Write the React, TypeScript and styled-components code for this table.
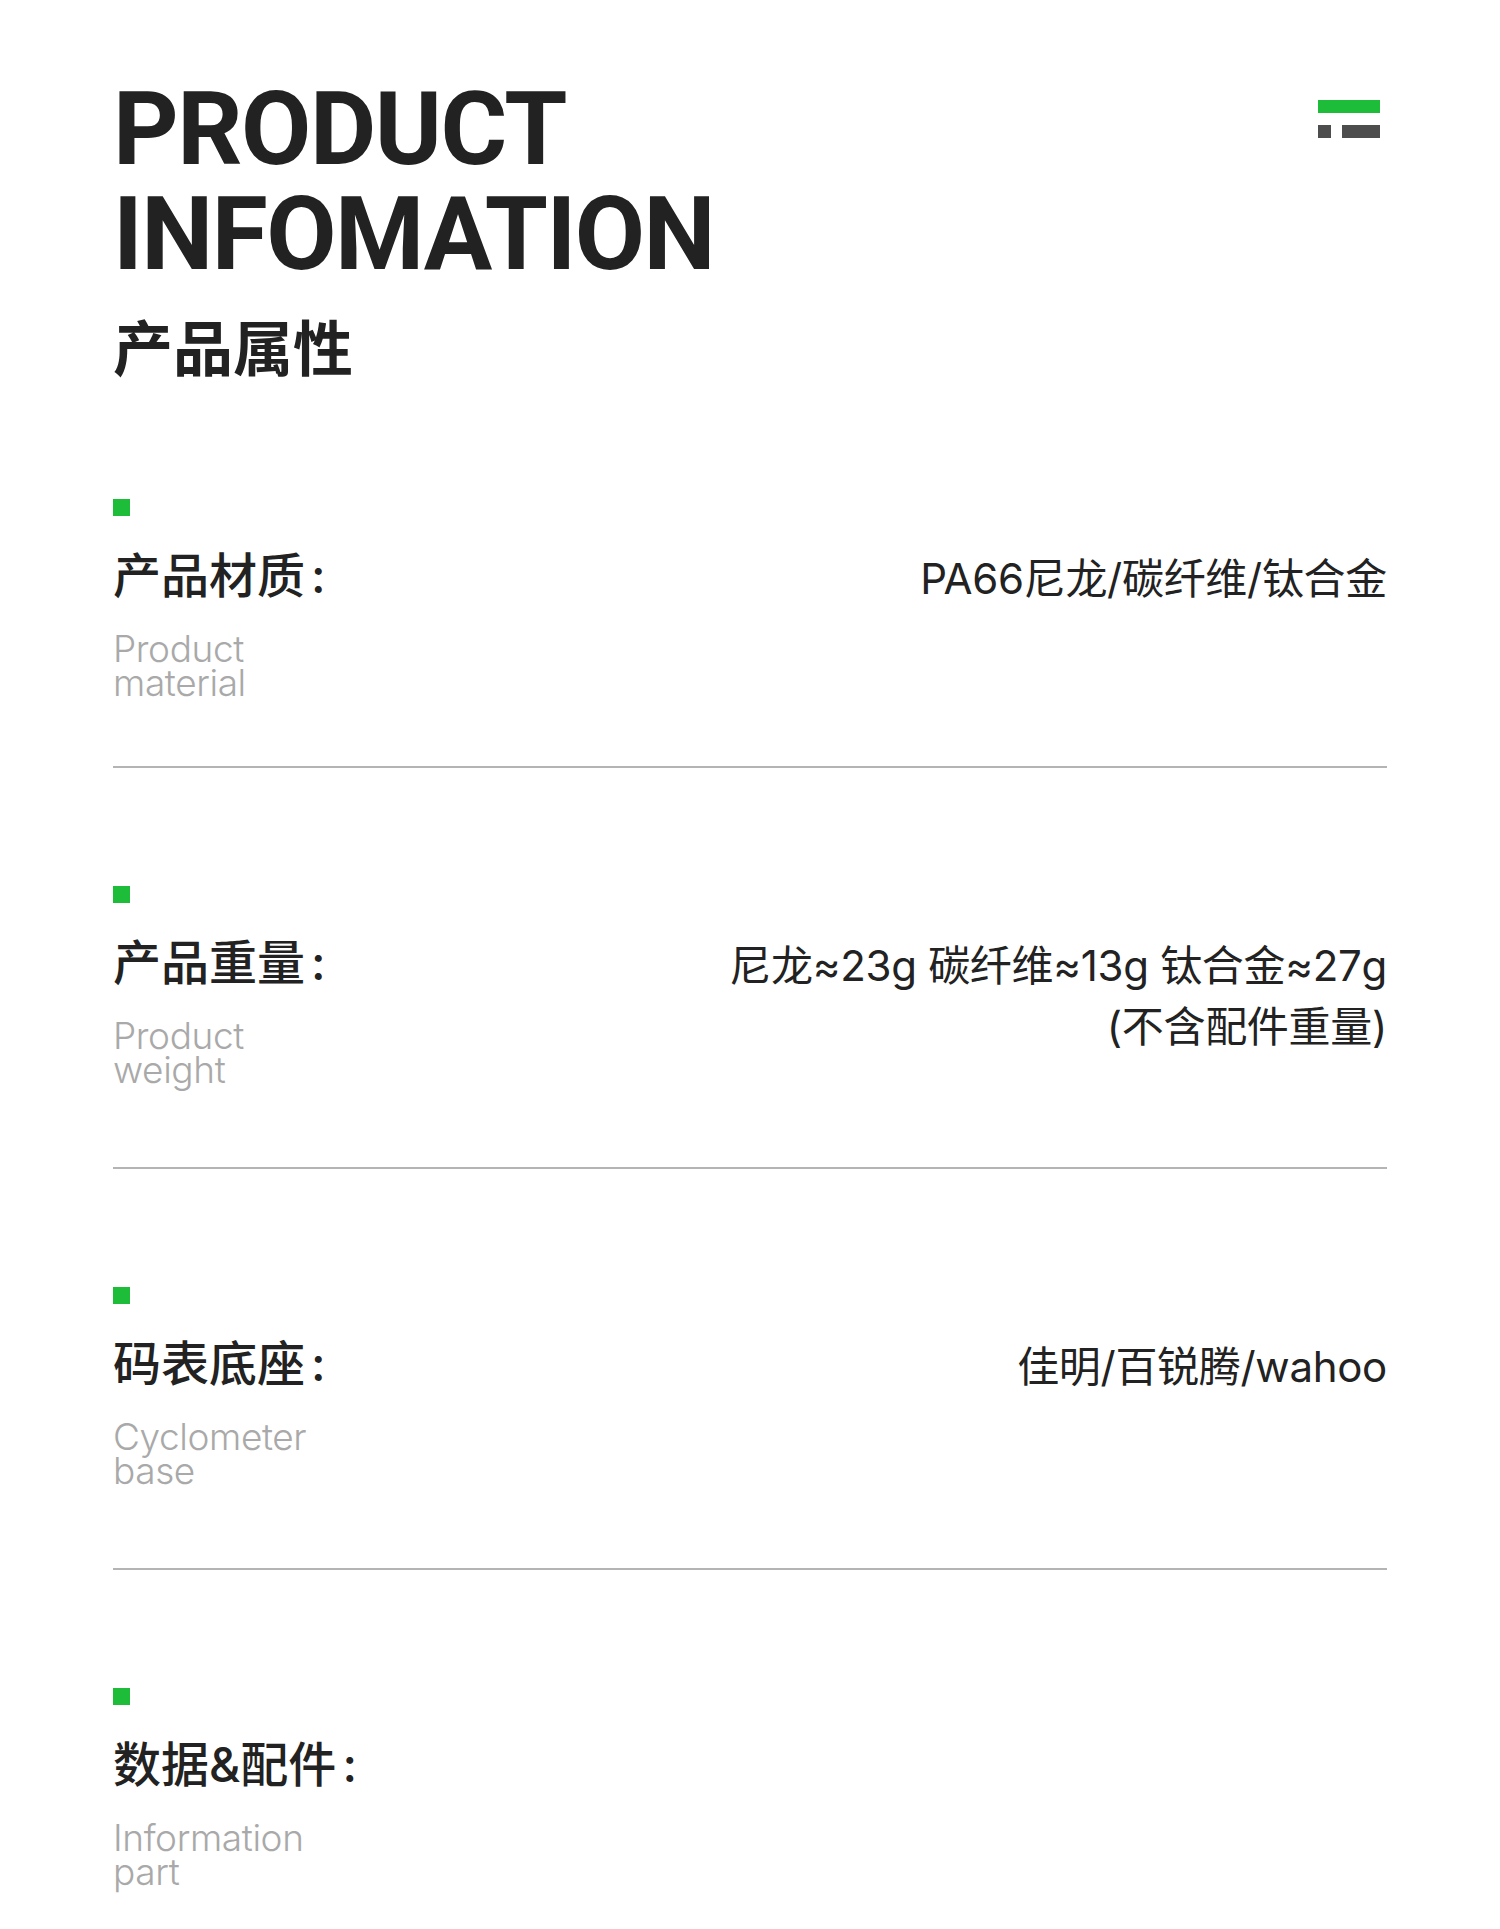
import React from "react";
import styled, { createGlobalStyle } from "styled-components";

const GlobalStyle = createGlobalStyle`
  html, body {
    margin: 0;
    padding: 0;
    background: #ffffff;
  }
  * { box-sizing: border-box; }
`;

const Page = styled.div`
  width: 1500px;
  min-height: 1929px;
  padding: 77px 113px 0;
  background: #ffffff;
  color: #222222;
  font-family: "Noto Sans CJK SC", "Noto Sans", sans-serif;
`;

const Header = styled.header`
  display: flex;
  justify-content: space-between;
  align-items: flex-start;
`;

const TitleBlock = styled.div`
  display: flex;
  flex-direction: column;
`;

const Title = styled.h1`
  margin: 0;
  font-family: Roboto, "Liberation Sans", sans-serif;
  font-weight: 700;
  font-size: 102px;
  line-height: 105px;
  letter-spacing: -1.5px;
  color: #222222;
`;

const Subtitle = styled.h2`
  margin: 28px 0 0;
  font-family: "Noto Sans CJK SC", sans-serif;
  font-weight: 700;
  font-size: 60px;
  line-height: 60px;
  color: #222222;
`;

const LogoMark = styled.svg`
  display: block;
  margin-top: 23px;
  margin-right: 7px;
`;

const List = styled.div`
  display: flex;
  flex-direction: column;
  margin-top: 6px;
`;

const Row = styled.section<{ $compact?: boolean; $last?: boolean }>`
  padding-top: 118px;
  padding-bottom: ${(p) => (p.$last ? "0" : p.$compact ? "66px" : "80px")};
  border-bottom: ${(p) => (p.$last ? "none" : "2px solid #b4b4b4")};
`;

const Bullet = styled.div`
  width: 17px;
  height: 17px;
  background: #1dbd39;
  margin-bottom: 32px;
`;

const Body = styled.div`
  display: flex;
  justify-content: space-between;
  align-items: flex-start;
`;

const LeftCol = styled.div`
  display: flex;
  flex-direction: column;
`;

const Label = styled.div`
  font-family: Inter, "Noto Sans CJK SC", sans-serif;
  font-weight: 500;
  font-size: 48px;
  line-height: 56px;
  color: #222222;
  white-space: nowrap;
`;

const Colon = styled.span`
  margin-left: 6px;
`;

const Value = styled.div`
  font-family: Inter, "Noto Sans CJK SC", sans-serif;
  font-weight: 400;
  font-size: 42px;
  line-height: 61px;
  letter-spacing: -0.3px;
  color: #222222;
  text-align: right;
  white-space: nowrap;
`;

const English = styled.div`
  margin-top: 28px;
  font-family: Inter, "Open Sans", sans-serif;
  font-weight: 300;
  font-size: 37px;
  line-height: 34px;
  letter-spacing: -0.4px;
  color: #a9a9a9;
`;

type Item = {
  label: string;
  value: string[];
  english: string[];
};

const items: Item[] = [
  {
    label: "产品材质",
    value: ["PA66尼龙/碳纤维/钛合金"],
    english: ["Product", "material"],
  },
  {
    label: "产品重量",
    value: ["尼龙≈23g 碳纤维≈13g 钛合金≈27g", "(不含配件重量)"],
    english: ["Product", "weight"],
  },
  {
    label: "码表底座",
    value: ["佳明/百锐腾/wahoo"],
    english: ["Cyclometer", "base"],
  },
  {
    label: "数据&配件",
    value: [],
    english: ["Information", "part"],
  },
];

const Logo = () => (
  <LogoMark width="62" height="38" viewBox="0 0 62 38">
    <rect x="0" y="0" width="62" height="13" fill="#1dbd39" />
    <rect x="0" y="25" width="13" height="13" fill="#4d4d4d" />
    <rect x="24" y="25" width="38" height="13" fill="#4d4d4d" />
  </LogoMark>
);

export default function App() {
  return (
    <Page>
      <GlobalStyle />
      <Header>
        <TitleBlock>
          <Title>
            PRODUCT
            <br />
            INFOMATION
          </Title>
          <Subtitle>产品属性</Subtitle>
        </TitleBlock>
        <Logo />
      </Header>
      <List>
        {items.map((item, i) => (
          <Row key={item.label} $compact={i === 0} $last={i === items.length - 1}>
            <Bullet />
            <Body>
              <LeftCol>
                <Label>
                  {item.label}
                  <Colon>:</Colon>
                </Label>
                <English>
                  {item.english.map((e) => (
                    <div key={e}>{e}</div>
                  ))}
                </English>
              </LeftCol>
              {item.value.length > 0 && (
                <Value>
                  {item.value.map((v) => (
                    <div key={v}>{v}</div>
                  ))}
                </Value>
              )}
            </Body>
          </Row>
        ))}
      </List>
    </Page>
  );
}
